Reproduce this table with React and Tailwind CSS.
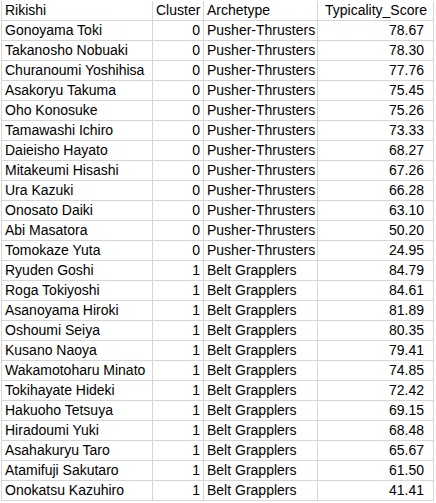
const ROWS = [
  ['Gonoyama Toki', 0, 'Pusher-Thrusters', '78.67'],
  ['Takanosho Nobuaki', 0, 'Pusher-Thrusters', '78.30'],
  ['Churanoumi Yoshihisa', 0, 'Pusher-Thrusters', '77.76'],
  ['Asakoryu Takuma', 0, 'Pusher-Thrusters', '75.45'],
  ['Oho Konosuke', 0, 'Pusher-Thrusters', '75.26'],
  ['Tamawashi Ichiro', 0, 'Pusher-Thrusters', '73.33'],
  ['Daieisho Hayato', 0, 'Pusher-Thrusters', '68.27'],
  ['Mitakeumi Hisashi', 0, 'Pusher-Thrusters', '67.26'],
  ['Ura Kazuki', 0, 'Pusher-Thrusters', '66.28'],
  ['Onosato Daiki', 0, 'Pusher-Thrusters', '63.10'],
  ['Abi Masatora', 0, 'Pusher-Thrusters', '50.20'],
  ['Tomokaze Yuta', 0, 'Pusher-Thrusters', '24.95'],
  ['Ryuden Goshi', 1, 'Belt Grapplers', '84.79'],
  ['Roga Tokiyoshi', 1, 'Belt Grapplers', '84.61'],
  ['Asanoyama Hiroki', 1, 'Belt Grapplers', '81.89'],
  ['Oshoumi Seiya', 1, 'Belt Grapplers', '80.35'],
  ['Kusano Naoya', 1, 'Belt Grapplers', '79.41'],
  ['Wakamotoharu Minato', 1, 'Belt Grapplers', '74.85'],
  ['Tokihayate Hideki', 1, 'Belt Grapplers', '72.42'],
  ['Hakuoho Tetsuya', 1, 'Belt Grapplers', '69.15'],
  ['Hiradoumi Yuki', 1, 'Belt Grapplers', '68.48'],
  ['Asahakuryu Taro', 1, 'Belt Grapplers', '65.67'],
  ['Atamifuji Sakutaro', 1, 'Belt Grapplers', '61.50'],
  ['Onokatsu Kazuhiro', 1, 'Belt Grapplers', '41.41'],
];

// cell widths include their right border
const cell = 'h-5 border-r border-b border-[#d6d6d6] px-[3px] leading-[19px] whitespace-nowrap overflow-hidden';

function Row({ cells, header }) {
  const [name, cluster, arch, score] = cells;
  return (
    <div className="flex">
      <div className={`${cell} w-[152px] border-l`}>{name}</div>
      <div className={`${cell} w-[51px] ${header ? '' : 'text-right'}`}>{cluster}</div>
      <div className={`${cell} w-[114px]`}>{arch}</div>
      <div className={`${cell} w-[116px] ${header ? 'pl-[7px]' : 'text-right pr-[9px]'}`}>{score}</div>
    </div>
  );
}

export default function App() {
  return (
    <div className="w-[436px] h-[503px] overflow-hidden bg-white text-black text-[14px] pt-px pl-px" style={{ fontFamily: '"Liberation Sans", Arial, sans-serif' }}>
      <Row header cells={['Rikishi', 'Cluster', 'Archetype', 'Typicality_Score']} />
      {ROWS.map((r) => (
        <Row key={r[0]} cells={r} />
      ))}
    </div>
  );
}
